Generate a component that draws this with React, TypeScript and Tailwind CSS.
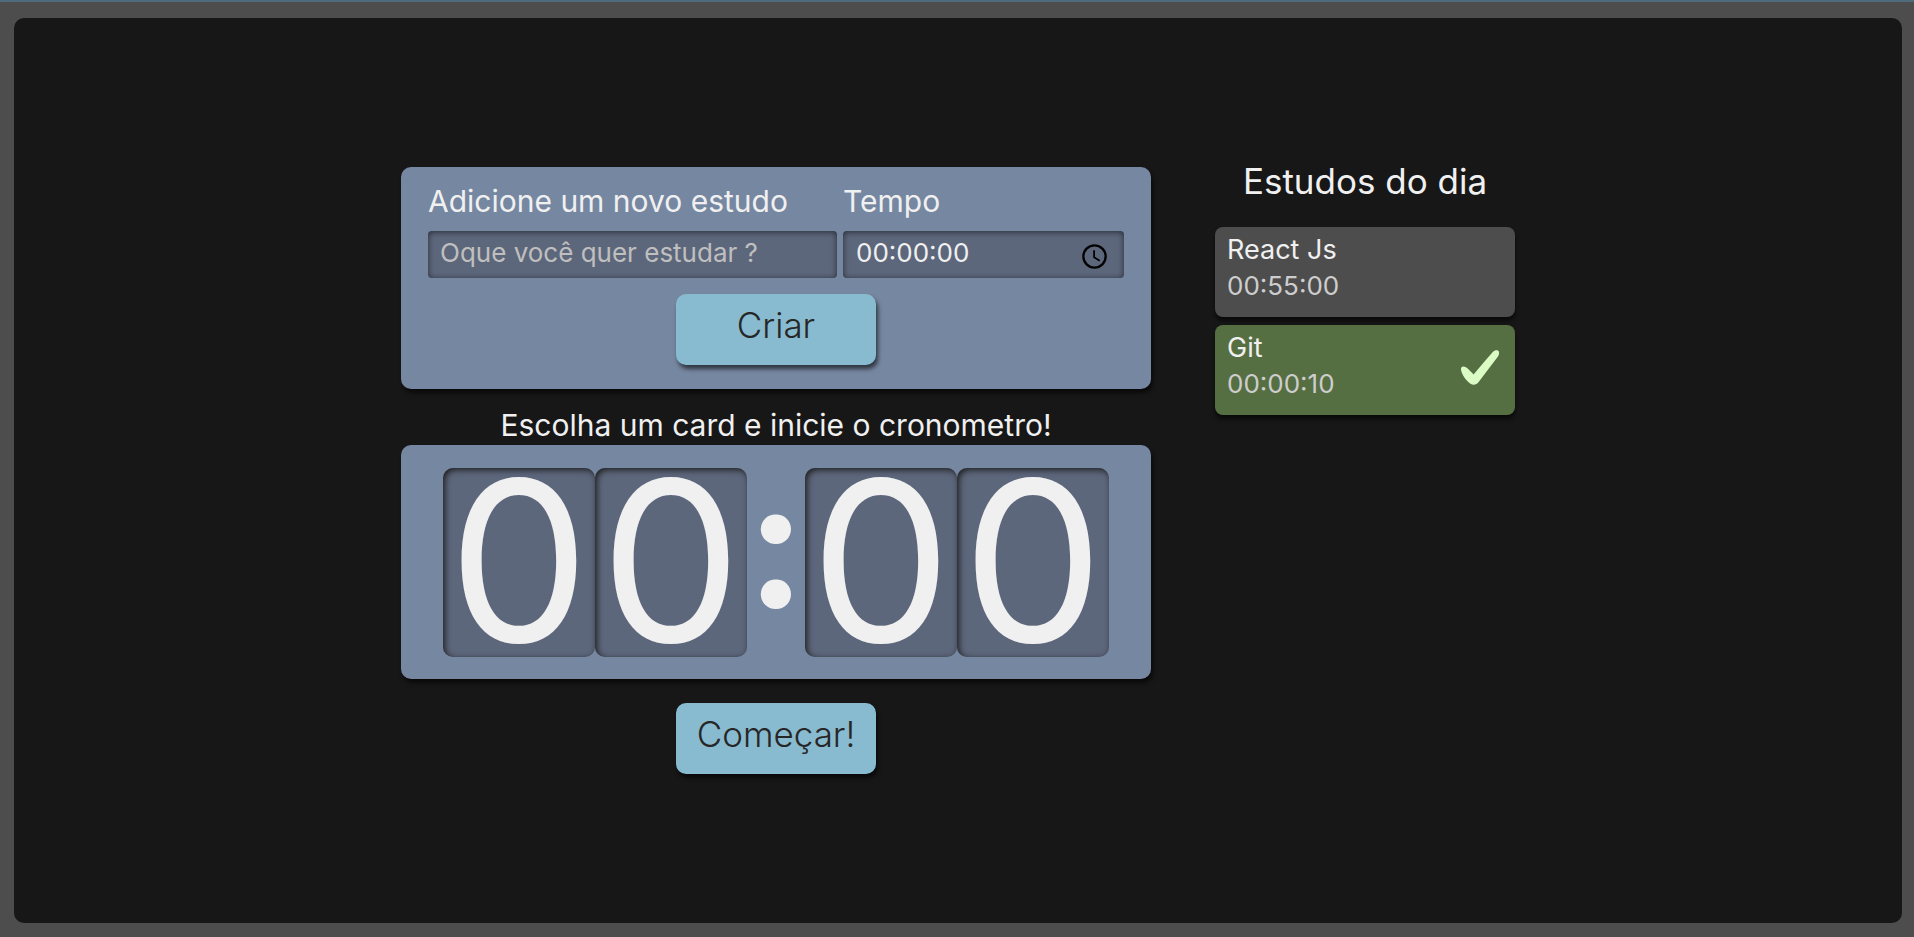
import { useState } from "react";

type Study = { name: string; time: string; done: boolean };

const studies: Study[] = [
  { name: "React Js", time: "00:55:00", done: false },
  { name: "Git", time: "00:00:10", done: true },
];

function ClockIcon() {
  return (
    <svg viewBox="0 0 24 24" className="size-[25px] shrink-0" fill="none" stroke="#000" strokeWidth="2.2" aria-hidden="true">
      <circle cx="12" cy="12" r="10.7" />
      <path d="M11.600 6v6.800l5.400 3.200" strokeWidth="1.700" />
    </svg>
  );
}

function CheckIcon() {
  return (
    <svg viewBox="0 0 38 35" className="h-[35px] w-[38px] shrink-0" fill="#dcfcc6" aria-hidden="true">
      <path d="M0 18.500C.2 16.300 2.800 15.800 5 17.300C7.800 19.200 10 22 12.600 24.600C18.500 17.500 25.500 9 31.800 2C33.800-.2 37.600-.6 38 2.200C38.200 4.500 37.300 6.200 35.800 8L18 31.500C15.500 34.800 12.500 35.600 9.500 33.700C4 30 -.3 22.500 0 18.500Z" />
    </svg>
  );
}

function Digit({ value }: { value: string }) {
  return (
    <span className="flex h-[189px] w-[152px] items-center justify-center rounded-[10px] bg-[#5d677c] pb-1 text-[224px] leading-none shadow-[inset_2px_2px_6px_#1e1e1e]">
      {value}
    </span>
  );
}

function ActionButton({ children, submit }: { children: string; submit?: boolean }) {
  return (
    <button
      type={submit ? "submit" : "button"}
      className="h-[71px] w-[200px] rounded-[10px] bg-[#88bad0] pb-2 text-[35px] leading-none font-light text-[#272626] shadow-[2px_4px_4px_rgba(0,0,0,0.6)]"
    >
      {children}
    </button>
  );
}

export default function App() {
  const [name, setName] = useState("");
  const [time, setTime] = useState("00:00:00");

  return (
    <div className="flex min-h-screen flex-col border-t-2 border-[#4d6b7a] bg-[#4d4d4d] px-3 pt-4 pb-3.5 pl-3.5 font-['Inter',sans-serif] text-[#f0f0f0]">
      <div className="flex grow items-center justify-center rounded-[10px] bg-[#171717] py-8">
        <div className="flex items-start gap-16">
          <main className="flex w-[750px] flex-col items-center">
            <form
              onSubmit={(e) => e.preventDefault()}
              className="flex w-full flex-col items-center rounded-[10px] bg-[#7687a1] px-[27px] pt-3.5 pb-6 shadow-[2px_4px_4px_rgba(0,0,0,0.6)]"
            >
              <div className="flex w-full gap-1.5">
                <div className="flex min-w-0 grow flex-col gap-2.5">
                  <label htmlFor="study" className="text-[30px] leading-10">
                    Adicione um novo estudo
                  </label>
                  <input
                    id="study"
                    value={name}
                    onChange={(e) => setName(e.target.value)}
                    placeholder="Oque você quer estudar ?"
                    className="h-[47px] w-full rounded bg-[#5d677c] px-3 pb-1 text-[26px] shadow-[inset_0_1px_6px_rgba(0,0,0,0.6)] outline-none placeholder:text-[#bfbfbf]"
                  />
                </div>
                <div className="flex w-[281px] shrink-0 flex-col gap-2.5">
                  <label htmlFor="time" className="text-[30px] leading-10">
                    Tempo
                  </label>
                  <div className="flex h-[47px] items-center rounded bg-[#5d677c] pt-1 pr-[17px] pl-[13px] shadow-[inset_0_1px_6px_rgba(0,0,0,0.6)]">
                    <input
                      id="time"
                      value={time}
                      onChange={(e) => setTime(e.target.value)}
                      className="w-0 grow bg-transparent pb-2 text-[26px] outline-none"
                    />
                    <ClockIcon />
                  </div>
                </div>
              </div>
              <div className="mt-4">
                <ActionButton submit>Criar</ActionButton>
              </div>
            </form>

            <p className="mt-4 text-[30px] leading-10">Escolha um card e inicie o cronometro!</p>

            <section className="flex w-full justify-center rounded-[10px] bg-[#7687a1] pt-[23px] pb-[22px] shadow-[2px_4px_4px_rgba(0,0,0,0.6)]">
              <Digit value="0" />
              <Digit value="0" />
              <span className="flex h-[189px] w-[58px] items-center justify-center pb-[52px] font-['Lato',sans-serif] text-[185px] leading-none font-black">
                :
              </span>
              <Digit value="0" />
              <Digit value="0" />
            </section>

            <div className="mt-6">
              <ActionButton>Começar!</ActionButton>
            </div>
          </main>

          <aside className="w-[300px]">
            <h2 className="pt-0.5 mb-[34px] text-center text-[35px] leading-6">Estudos do dia</h2>
            <ul className="flex flex-col gap-2">
              {studies.map((s) => (
                <li
                  key={s.name}
                  className={`flex h-[90px] items-center justify-between rounded-lg pr-4 pl-3 shadow-[0_4px_4px_rgba(0,0,0,0.6)] ${
                    s.done ? "bg-[#566f42]" : "bg-[#4d4d4d]"
                  }`}
                >
                  <div className="pb-2">
                    <h3 className="text-[27px] leading-9">{s.name}</h3>
                    <p className="text-[26px] leading-9 text-[#cdcdcd]">{s.time}</p>
                  </div>
                  {s.done && (
                    <div className="pb-1.5">
                      <CheckIcon />
                    </div>
                  )}
                </li>
              ))}
            </ul>
          </aside>
        </div>
      </div>
    </div>
  );
}
